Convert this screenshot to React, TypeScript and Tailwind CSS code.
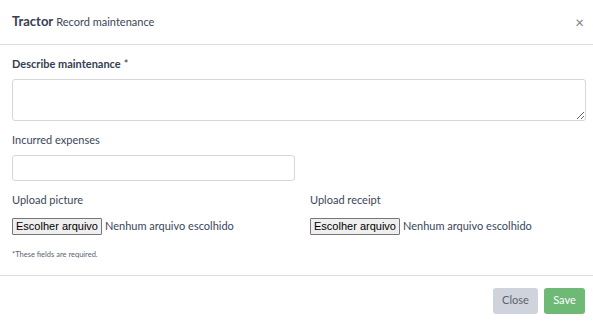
import React from "react";

const font = { fontFamily: "Lato, 'Open Sans', sans-serif" };

export default function App() {
  return (
    <div className="flex h-[325px] w-[593px] flex-col bg-white text-[#3b4658]" style={font}>
      {/* header */}
      <div className="flex h-[45px] shrink-0 items-center justify-between border-b border-[#dcdde1] pl-3 pr-[9px]">
        <div className="flex items-baseline gap-[3px]">
          <span className="text-[13px] font-bold text-[#35404f]">Tractor</span>
          <span className="text-[11px] text-[#3b4658]">Record maintenance</span>
        </div>
        <button className="text-[15px] leading-none text-[#7a7f8a]">×</button>
      </div>

      {/* body */}
      <div className="flex h-[230px] shrink-0 flex-col px-3 pt-[12px]">
        <label className="text-[11px] leading-[14px] font-bold text-[#35404f]">
          Describe maintenance<span className="ml-[3px] font-normal">*</span>
        </label>
        <textarea className="mt-[8px] h-[42px] w-[574px] shrink-0 rounded-[3px] border border-[#d6d7db] bg-white outline-none" />

        <label className="mt-[12px] text-[11px] leading-[14px]">Incurred expenses</label>
        <input className="mt-[8px] h-[26px] w-[283px] shrink-0 rounded-[3px] border border-[#d6d7db] bg-white outline-none" />

        <div className="mt-[12px] grid grid-cols-[298px_1fr]">
          {["Upload picture", "Upload receipt"].map((label) => (
            <div key={label} className="flex flex-col">
              <span className="text-[11px] leading-[14px]">{label}</span>
              <div className="mt-[11px] flex items-center gap-[3px] whitespace-nowrap">
                <span
                  className="flex h-[17px] w-[90px] items-center justify-center rounded-[1px] border border-[#767676] bg-[#efefef] text-[11px] text-black"
                  style={{ fontFamily: "'Liberation Sans', Arial, sans-serif" }}
                >
                  Escolher arquivo
                </span>
                <span className="text-[11px] text-[#3b4658]">Nenhum arquivo escolhido</span>
              </div>
            </div>
          ))}
        </div>

        <span className="mt-[15px] text-[7.5px] leading-[10px] text-[#5b6473]">*These fields are required.</span>
      </div>

      {/* footer */}
      <div className="flex flex-1 items-center justify-end gap-[6px] border-t border-[#dcdde1] pr-[8px]">
        <button className="h-[26px] w-[45px] rounded-[3px] bg-[#cfd3db] text-[11px] text-[#5a6272]">Close</button>
        <button className="h-[26px] w-[41px] rounded-[3px] bg-[#6db975] text-[11px] text-white">Save</button>
      </div>
    </div>
  );
}
